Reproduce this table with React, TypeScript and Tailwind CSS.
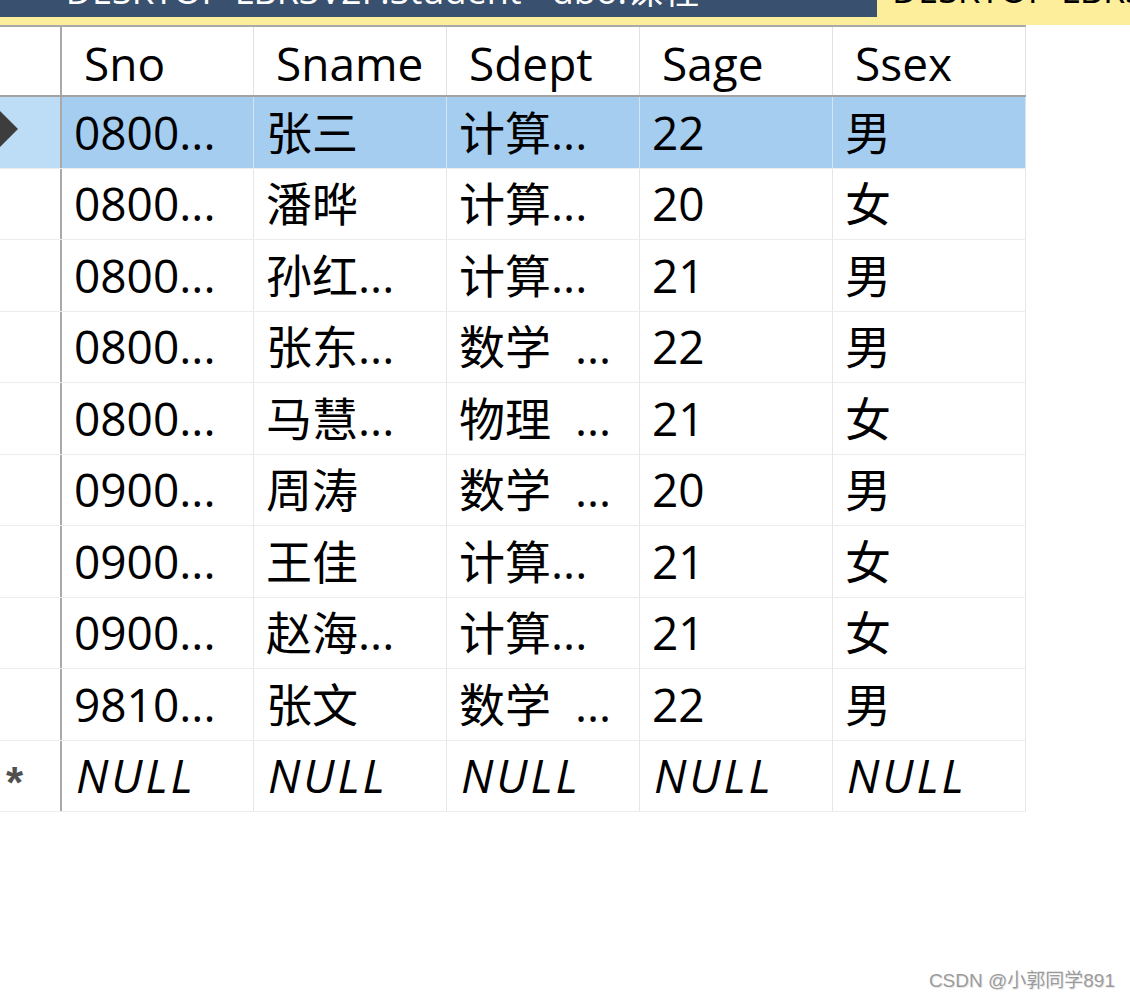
import React from "react";

const columns = ["Sno", "Sname", "Sdept", "Sage", "Ssex"];

const rows: string[][] = [
  ["0800...", "张三", "计算...", "22", "男"],
  ["0800...", "潘晔", "计算...", "20", "女"],
  ["0800...", "孙红...", "计算...", "21", "男"],
  ["0800...", "张东...", "数学  ...", "22", "男"],
  ["0800...", "马慧...", "物理  ...", "21", "女"],
  ["0900...", "周涛", "数学  ...", "20", "男"],
  ["0900...", "王佳", "计算...", "21", "女"],
  ["0900...", "赵海...", "计算...", "21", "女"],
  ["9810...", "张文", "数学  ...", "22", "男"],
];

const font = "font-['Open_Sans','Noto_Sans_CJK_SC',sans-serif]";

function colWidth(i: number) {
  return i === 0 ? "w-[192px]" : "w-[193px]";
}

export default function App() {
  return (
    <div className={`relative h-[1002px] w-[1130px] overflow-hidden bg-white ${font}`}>
      {/* tab strip, only the bottom edge is in view */}
      <div className="h-[25px] bg-[#fdee9b]">
        <div className="flex h-[17px]">
          <div className="flex w-[877px] justify-end overflow-hidden bg-[#3a506f] pr-[178px]">
            <span className="mt-[-27px] whitespace-nowrap text-[36px] leading-[36px] text-white">
              DESKTOP-LBR3V2F.Student - dbo.课程
            </span>
          </div>
          <div className="flex-1 overflow-hidden pl-[15px]">
            <span className="mt-[-28px] block whitespace-nowrap text-[36px] leading-[36px] text-black">
              DESKTOP-LBR3V2F.Stu
            </span>
          </div>
        </div>
      </div>

      <div className="w-[1026px] border-t-2 border-[#a9a9a9]">
        {/* header */}
        <div className="flex h-[70px] border-b-2 border-[#a3a3a3]">
          <div className="w-[62px] border-r-2 border-[#a9a9a9]" />
          {columns.map((c, i) => (
            <div
              key={c}
              className={`${colWidth(i)} flex items-center border-r border-[#e2e2e2] pl-[22px] pt-[4px] text-[46px] text-black`}
            >
              {c}
            </div>
          ))}
        </div>

        {/* body */}
        {rows.map((r, ri) => {
          const sel = ri === 0;
          return (
            <div key={ri} className={`flex h-[71.5px] border-b border-[#ececec] ${sel ? "bg-[#a4cdf0]" : ""}`}>
              <div className={`relative w-[62px] border-r-2 border-[#a9a9a9] ${sel ? "bg-[#bddcf5]" : "bg-white"}`}>
                {sel && (
                  <svg className="absolute left-0 top-0" width="30" height="60" viewBox="0 0 30 60">
                    <polygon points="-6,8 18,32 -6,56" fill="#3d3d3d" />
                  </svg>
                )}
              </div>
              {r.map((v, ci) => (
                <div
                  key={ci}
                  className={`${colWidth(ci)} flex items-center whitespace-pre border-r ${sel ? "border-[#d2e5f5]" : "border-[#e6e6e6]"} pl-[12px] text-[46px] text-black`}
                >
                  {v}
                </div>
              ))}
            </div>
          );
        })}

        {/* new row */}
        <div className="flex h-[71.5px] border-b border-[#ececec]">
          <div className="flex w-[62px] items-start border-r-2 border-[#a9a9a9] pl-[6px] pt-[20px]">
            <span className="font-['Liberation_Sans',sans-serif] text-[44px] font-bold leading-[44px] text-[#505050]">*</span>
          </div>
          {columns.map((c, i) => (
            <div
              key={c}
              className={`${colWidth(i)} flex items-center border-r border-[#e6e6e6] pl-[14px] text-[46px] italic tracking-[3px] text-black`}
            >
              NULL
            </div>
          ))}
        </div>
      </div>

      <div className="absolute bottom-[7px] right-[15px] font-['Liberation_Sans','Noto_Sans_CJK_SC',sans-serif] text-[19px] text-[#9b9b9b] [text-shadow:1px_1px_0_#e8e8e8]">
        CSDN @小郭同学891
      </div>
    </div>
  );
}
